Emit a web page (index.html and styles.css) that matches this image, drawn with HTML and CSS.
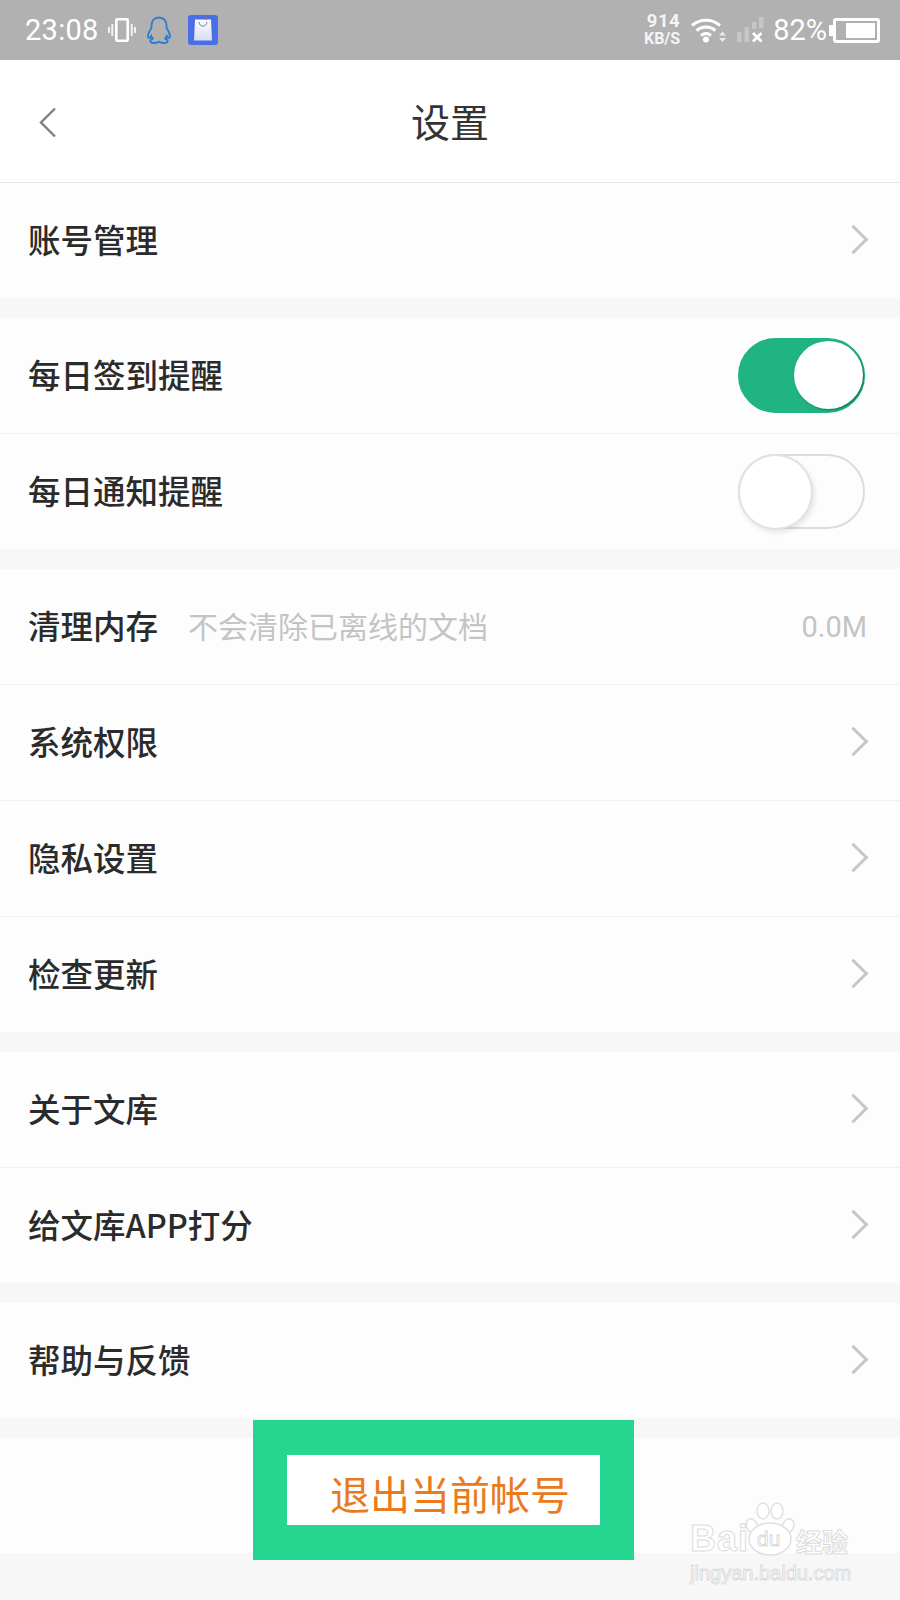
FILE: index.html
```html
<!DOCTYPE html>
<html lang="zh-CN">
<head>
  <meta charset="UTF-8">
  <meta name="viewport" content="width=device-width, initial-scale=1.0">
  <title>设置</title>
  <link rel="stylesheet" href="styles.css">
</head>
<body>
  <div class="statusbar">
    <div class="status-left">
      <span class="time">23:08</span>
      <svg class="ic-vibrate" width="28" height="24" viewBox="0 0 28 24">
        <rect x="8.300" y="1.300" width="11.400" height="21.400" rx="1" fill="none" stroke="#fff" stroke-width="2.600"/>
        <path d="M4.300 6v12M1 9v6M23.700 6v12M27 9v6" stroke="#f2f2f2" stroke-width="2" fill="none"/>
      </svg>
      <svg class="ic-qq" width="26" height="28" viewBox="0 0 26 28">
        <path d="M13 1.500c-5 0-7.500 3.800-7.500 8 0 1.200 0 2-.3 2.800-1.200 2-3.200 5-3.200 8 0 1.300.6 1.700 1.300 1.500.8-.2 1.500-1 2-1.800.3 1 .8 1.900 1.500 2.600-1.500.5-2.500 1.300-2.500 2.400 0 1.300 2 2 4 2 1.900 0 3.500-.4 4.700-1.300 1.200.9 2.800 1.300 4.700 1.300 2 0 4-.7 4-2 0-1.100-1-1.900-2.500-2.400.7-.7 1.200-1.600 1.500-2.600.5.800 1.200 1.600 2 1.800.7.200 1.300-.2 1.300-1.500 0-3-2-6-3.200-8-.3-.8-.3-1.600-.3-2.800 0-4.200-2.500-8-7.500-8z" fill="none" stroke="#2a7bd0" stroke-width="1.800"/>
      </svg>
      <svg class="ic-bag" width="30" height="30" viewBox="0 0 30 30">
        <defs>
          <linearGradient id="bagFill" x1="0" y1="0" x2="0" y2="1">
            <stop offset="0" stop-color="#fdfdfe"/>
            <stop offset="1" stop-color="#d9dded"/>
          </linearGradient>
        </defs>
        <rect width="30" height="30" rx="3" fill="#4a6ee8"/>
        <path d="M7 4.500h16l1 21H6z" fill="url(#bagFill)"/>
        <path d="M11 7c.5 5.500 7.500 5.500 8 0" fill="none" stroke="#6f80ad" stroke-width="1"/>
        <circle cx="18" cy="4" r="1" fill="#e0566a"/>
      </svg>
    </div>
    <div class="status-right">
      <div class="netspeed"><span class="net-num">914</span><span class="net-unit">KB/S</span></div>
      <svg class="ic-wifi" width="36" height="26" viewBox="0 0 36 26">
        <path d="M1 8.500C9 1.500 21 1.500 29 8.500M5.500 13.500c5.500-4.600 13.500-4.600 19 0M10 18.500c3-2.400 7-2.400 10 0" fill="none" stroke="#fff" stroke-width="3"/>
        <circle cx="15" cy="22.500" r="3" fill="#fff"/>
        <path d="M31.500 14.500l3.500 4h-7zM31.500 25l-3.500-4h7z" fill="#ececec"/>
      </svg>
      <svg class="ic-signal" width="28" height="26" viewBox="0 0 28 26">
        <path d="M1 15h4.500v10H1zM8.500 10H13v15H8.500zM16 5h4.500v7H16zM23 0h4.500v11H23z" fill="#c6c6c6"/>
        <path d="M17 16l8.500 8.500M25.500 16 17 24.500" stroke="#fff" stroke-width="2.800"/>
      </svg>
      <span class="battery-pct">82%</span>
      <div class="battery"><div class="battery-level"></div></div>
    </div>
  </div>

  <div class="header">
    <svg class="back" width="18" height="31" viewBox="0 0 18 31">
      <path d="M16 1.500 2 15.500l14 14" fill="none" stroke="#808080" stroke-width="2.400"/>
    </svg>
    <h1>设置</h1>
  </div>

  <div class="group">
    <div class="row"><span class="label">账号管理</span><span class="chevron"></span></div>
  </div>

  <div class="group">
    <div class="row"><span class="label">每日签到提醒</span><span class="switch on"></span></div>
    <div class="row"><span class="label">每日通知提醒</span><span class="switch"></span></div>
  </div>

  <div class="group">
    <div class="row">
      <span class="label">清理内存</span>
      <span class="hint">不会清除已离线的文档</span>
      <span class="size">0.0M</span>
    </div>
    <div class="row"><span class="label">系统权限</span><span class="chevron"></span></div>
    <div class="row"><span class="label">隐私设置</span><span class="chevron"></span></div>
    <div class="row"><span class="label">检查更新</span><span class="chevron"></span></div>
  </div>

  <div class="group">
    <div class="row"><span class="label">关于文库</span><span class="chevron"></span></div>
    <div class="row"><span class="label">给文库APP打分</span><span class="chevron"></span></div>
  </div>

  <div class="group">
    <div class="row"><span class="label">帮助与反馈</span><span class="chevron"></span></div>
  </div>

  <div class="group">
    <div class="row"></div>
  </div>

  <!-- 截图上的标注框 -->
  <div class="callout"><div class="callout-inner">退出当前帐号</div></div>

  <!-- 水印 -->
  <div class="watermark">
    <div class="wm-logo">
      <span class="wm-bai">Bai</span>
      <div class="wm-paw">
        <svg width="50" height="54" viewBox="0 0 50 54">
          <g fill="#fff" stroke="#e0e0e0" stroke-width="1.500">
            <ellipse cx="7" cy="24" rx="5.500" ry="7.500" transform="rotate(-25 7 24)"/>
            <ellipse cx="18" cy="9" rx="6" ry="8"/>
            <ellipse cx="32" cy="9" rx="6" ry="8"/>
            <ellipse cx="43" cy="24" rx="5.500" ry="7.500" transform="rotate(25 43 24)"/>
            <ellipse cx="25" cy="37" rx="21" ry="16"/>
          </g>
        </svg>
        <span class="wm-du">du</span>
      </div>
      <span class="wm-jy">经验</span>
    </div>
    <div class="wm-url">jingyan.baidu.com</div>
  </div>
</body>
</html>
```

FILE: styles.css
```css
:root {
  --bg-page: #f7f7f7;
  --bg-row: #fdfdfd;
  --line: #f1f1f1;
  --text-main: #2b2b2b;
  --text-gray: #c4c4c4;
  --green: #20b483;
}

* {
  box-sizing: border-box;
  margin: 0;
  padding: 0;
}

html,
body {
  height: 1600px;
}

body {
  position: relative;
  overflow: hidden;
  font-family: "Noto Sans CJK SC", "Noto Sans", sans-serif;
  background-color: var(--bg-page);
  color: var(--text-main);
}

.statusbar {
  height: 60px;
  background-color: #b1b1b1;
  color: #fff;
  display: flex;
  align-items: center;
  justify-content: space-between;
  padding: 0 20px 0 25px;
  font-family: Roboto, sans-serif;
}

.status-left,
.status-right {
  display: flex;
  align-items: center;
}

.time {
  font-size: 29px;
  letter-spacing: 0.3px;
  margin-right: 9px;
}

.ic-qq {
  margin-left: 10px;
}

.ic-bag {
  margin-left: 16px;
}

.netspeed {
  display: flex;
  flex-direction: column;
  align-items: flex-end;
  font-weight: 700;
  line-height: 17px;
  margin-right: 11px;
  color: #f4f4f4;
}

.net-num {
  font-size: 18.500px;
  letter-spacing: 0.5px;
}

.net-unit {
  font-size: 16px;
}

.ic-signal {
  margin-left: 9px;
}

.battery-pct {
  font-size: 29px;
  margin-left: 9px;
}

.battery {
  width: 47px;
  height: 25px;
  margin-left: 6px;
  border: 3px solid #fff;
  border-radius: 3px;
  padding: 2px 2px 2px 10px;
  position: relative;
}

.battery::before {
  content: "";
  position: absolute;
  left: -7px;
  top: 4px;
  width: 4px;
  height: 11px;
  background-color: #fff;
}

.battery-level {
  height: 100%;
  background-color: #fff;
}

.header {
  height: 123px;
  background-color: #fff;
  border-bottom: 1px solid #e6e6e6;
  display: flex;
  align-items: center;
  justify-content: center;
  position: relative;
}

.header h1 {
  font-size: 39px;
  font-weight: 400;
  color: #333;
  margin-bottom: 3px;
}

.back {
  position: absolute;
  left: 39px;
  top: 47px;
}

.group {
  background-color: var(--bg-row);
  margin-bottom: 20px;
}

.row {
  height: 115px;
  padding: 0 33px 0 28px;
  display: flex;
  align-items: center;
}

.row + .row {
  height: 116px;
  border-top: 1px solid var(--line);
}

.label {
  font-size: 32.500px;
  font-weight: 500;
  margin-bottom: 4px;
}

.hint {
  font-size: 30px;
  color: var(--text-gray);
  margin-left: 30px;
  margin-bottom: 4px;
}

.size {
  font-family: Roboto, sans-serif;
  font-size: 29px;
  color: var(--text-gray);
  margin-left: auto;
}

.chevron {
  width: 21px;
  height: 21px;
  margin-left: auto;
  margin-right: 3px;
  margin-bottom: 2px;
  border-top: 3px solid #c6c6c6;
  border-right: 3px solid #c6c6c6;
  transform: rotate(45deg);
}

.switch {
  width: 127px;
  height: 75px;
  margin-left: auto;
  margin-right: 2px;
  border: 2.500px solid #dcdcdc;
  border-radius: 38px;
  position: relative;
}

.switch::after {
  content: "";
  position: absolute;
  left: -2px;
  top: -2px;
  width: 71px;
  height: 72px;
  background-color: #fff;
  border: 2px solid #e2e2e2;
  border-radius: 50%;
  box-shadow: 2px 3px 5px rgba(0, 0, 0, 0.09);
}

.switch.on {
  background-color: var(--green);
  border-color: var(--green);
}

.switch.on::after {
  left: auto;
  right: 0;
  top: 1px;
  width: 69px;
  height: 68px;
  border: none;
  box-shadow: 1px 1px 2px rgba(0, 60, 40, 0.55);
}

.callout {
  position: absolute;
  left: 253px;
  top: 1420px;
  width: 381px;
  height: 140px;
  background-color: #26d58f;
  padding: 35px 34px;
}

.callout-inner {
  height: 70px;
  padding-top: 3px;
  padding-left: 43px;
  background-color: #fff;
  color: #ea7a1b;
  font-size: 40px;
  line-height: 70px;
  white-space: nowrap;
}

.watermark {
  position: absolute;
  left: 690px;
  top: 1502px;
  width: 170px;
  color: #fff;
  font-family: "Liberation Sans", sans-serif;
  -webkit-text-stroke: 1px #dcdcdc;
}

.wm-logo {
  display: flex;
  align-items: flex-end;
  height: 54px;
}

.wm-bai {
  font-size: 36px;
  font-weight: 700;
  line-height: 40px;
  letter-spacing: 1px;
  width: 55px;
  margin-bottom: -3px;
}

.wm-paw {
  position: relative;
  width: 50px;
  height: 54px;
}

.wm-du {
  position: absolute;
  left: 12px;
  top: 25px;
  font-size: 21px;
  line-height: 24px;
  -webkit-text-stroke: 0.800px #d4d4d4;
}

.wm-jy {
  font-family: "Noto Sans CJK SC", sans-serif;
  font-size: 26px;
  font-weight: 700;
  line-height: 30px;
  margin-left: 1px;
  white-space: nowrap;
}

.wm-url {
  margin-top: 5px;
  font-size: 20px;
  line-height: 24px;
  white-space: nowrap;
}
```
